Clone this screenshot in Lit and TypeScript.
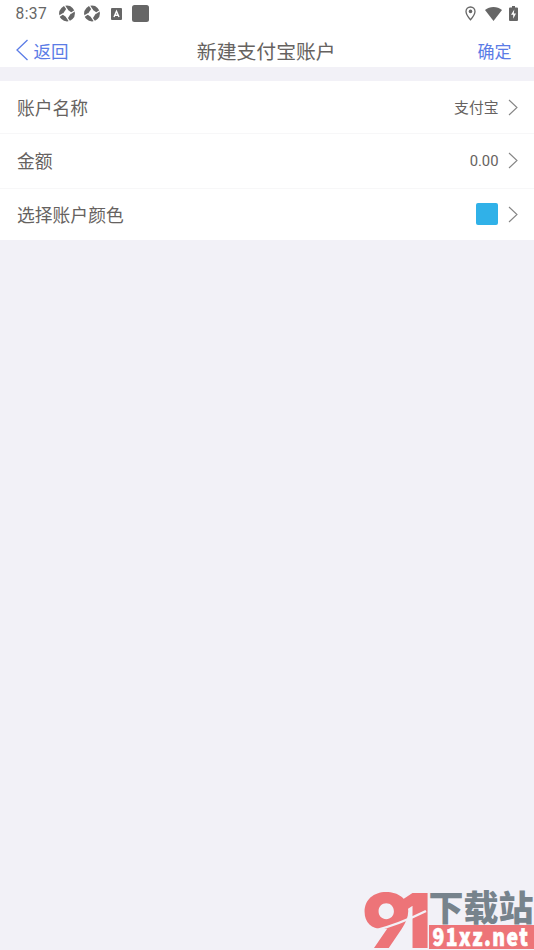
import { LitElement, html, css, svg, nothing } from "lit";
import { customElement, property } from "lit/decorators.js";

@customElement("status-bar")
class StatusBar extends LitElement {
  static styles = css`
    :host { display: flex; height: 30px; box-sizing: border-box; justify-content: space-between; align-items: flex-start; padding: 0 16px 0 15.5px; color: #666; font: 400 15.6px/28px Roboto, sans-serif; }
    .side { display: flex; align-items: center; height: 27px; }
    .time { letter-spacing: 0.4px; width: 43px; padding-top: 1px; }
    svg { display: block; fill: currentColor; }
    .shutter { margin-right: 8px; }
    .letter { margin: 0 10px 0 2px; }
    .wifi { margin: 0 7px 0 9px; }
  `;
  private shutter() {
    return html`<svg class="shutter" width="17" height="17" viewBox="0 0 17 17">
      <circle cx="8" cy="8.5" r="7.9" />
      <path d="M7.3 3.8L12.5 7.6L8.8 13.2L3.5 9.4Z" fill="#fff" />
      <path d="M5 0L8.5 5M16.5 5.3L11.5 8.5M11 17L7.5 12M-.5 11.7L4.5 8.5" stroke="#fff" stroke-width="1.3" fill="none" />
    </svg>`;
  }
  render() {
    return html`
      <div class="side">
        <span class="time">8:37</span>
        ${this.shutter()}${this.shutter()}
        <svg class="letter" width="11" height="12" viewBox="0 0 11 12">
          <rect width="11" height="12" rx="1" />
          <path d="M3 9L5.5 3.2L8 9M4 7.2H7" stroke="#fff" stroke-width="1.4" fill="none" />
        </svg>
        <svg width="17" height="17"><rect width="17" height="17" rx="2.5" /></svg>
      </div>
      <div class="side">
        <svg width="11" height="15" viewBox="0 0 11 15">
          <path d="M5.5 1C2.9 1 1 3 1 5.5C1 8.6 5.5 13.8 5.5 13.8S10 8.6 10 5.5C10 3 8.1 1 5.5 1Z" fill="none" stroke="currentColor" stroke-width="1.3" />
          <circle cx="5.5" cy="5.4" r="1.8" />
        </svg>
        <svg class="wifi" width="17" height="14" viewBox="0 0 17 14"><path d="M0 3C4.7-.9 12.3-.9 17 3L8.5 14Z" /></svg>
        <svg width="9" height="15" viewBox="0 0 9 15">
          <path d="M3 0H6V1.5H8Q9 1.5 9 2.5V14Q9 15 8 15H1Q0 15 0 14V2.5Q0 1.5 1 1.5H3Z" />
          <path d="M5.3 3.5L2 8.7H4.2V12.8L7 7.6H4.8Z" fill="#fff" />
        </svg>
      </div>`;
  }
}

@customElement("nav-bar")
class NavBar extends LitElement {
  static styles = css`
    :host { display: grid; grid-template-columns: 1fr auto 1fr; height: 37px; align-items: start; padding: 0 22.5px 0 15px; color: #5b7ce6; font: 17.5px/42px "Noto Sans CJK SC", sans-serif; }
    .back { display: flex; align-items: flex-start; }
    .back svg { margin: 9px 4.5px 0 0; }
    .title { color: #666260; font-size: 19.85px; font-weight: 400; margin: 0 0 0 6px; line-height: 41px; }
    .ok { text-align: right; font-size: 17px; }
  `;
  render() {
    return html`
      <div class="back">
        <svg width="14" height="22" viewBox="0 0 14 22"><path d="M12.5 1L2 11L12.5 21" fill="none" stroke="currentColor" stroke-width="1.3" /></svg>
        <span>返回</span>
      </div>
      <h1 class="title">新建支付宝账户</h1>
      <div class="ok">确定</div>`;
  }
}

@customElement("setting-row")
class SettingRow extends LitElement {
  @property() label = "";
  @property() value = "";
  @property({ type: Boolean }) swatch = false;
  static styles = css`
    :host { display: flex; align-items: center; box-sizing: border-box; background: #fff; padding: 0 16px 0 17px; color: #666260; font: 17.8px/26px "Noto Sans CJK SC", sans-serif; }
    .label { flex: 1; }
    .value { font: 14.8px/24px Roboto, "Noto Sans CJK SC", sans-serif; padding-top: 2px; margin-right: -0.5px; }
    .swatch { width: 22px; height: 22px; border-radius: 2px; background: #30b1e8; }
    svg { display: block; margin-left: 10px; }
  `;
  render() {
    return html`
      <span class="label">${this.label}</span>
      ${this.value ? html`<span class="value">${this.value}</span>` : nothing}
      ${this.swatch ? html`<div class="swatch"></div>` : nothing}
      <svg width="10" height="17" viewBox="0 0 10 17"><path d="M1 1L9 8.5L1 16" fill="none" stroke="#858585" stroke-width="1.1" /></svg>`;
  }
}

@customElement("site-mark")
class SiteMark extends LitElement {
  static styles = css`
    :host { display: block; }
    svg { display: block; }
    .digits { font-family: Inter, sans-serif; font-weight: 900; fill: #ed7478; font-feature-settings: "ss01", "cv04"; letter-spacing: -14px; }
    .name { font-family: "Noto Sans CJK SC", sans-serif; font-weight: 900; fill: #77838c; }
    .url { font-family: "Noto Sans CJK SC", sans-serif; font-weight: 900; fill: #fff; stroke: #fff; stroke-width: 0.7px; letter-spacing: 1.9px; }
  `;
  render() {
    return html`<svg width="172" height="62" viewBox="0 0 172 62">${svg`
      <text class="digits" x="0" y="60" font-size="76">91</text>
      <path d="M10 43.5Q38 36 64 23" fill="none" stroke="#f2f1f7" stroke-width="2.5" />
      <text class="name" x="66.5" y="32.5" font-size="35" textLength="105" lengthAdjust="spacingAndGlyphs">下载站</text>
      <rect x="67" y="37" width="105" height="24" fill="#ed7478" />
      <text class="url" transform="translate(70.5 57.5) scale(.79 1)" font-size="24.5">91xz.net</text>`}
    </svg>`;
  }
}

@customElement("app-root")
class AppRoot extends LitElement {
  static styles = css`
    :host { display: flex; flex-direction: column; height: 950px; background: #f2f1f7; overflow: hidden; position: relative; }
    .top { background: #fff; }
    .list { margin-top: 14px; display: grid; grid-template-rows: 52px 54px 51px; gap: 1px; background: #f7f7f8; }
    .raised { padding-bottom: 2px; }
    .lifted { padding-bottom: 1px; }
    .mark { position: absolute; right: 0; bottom: 0; }
  `;
  render() {
    return html`
      <div class="top"><status-bar></status-bar><nav-bar></nav-bar></div>
      <div class="list">
        <setting-row label="账户名称" value="支付宝"></setting-row>
        <setting-row class="raised" label="金额" value="0.00"></setting-row>
        <setting-row class="lifted" label="选择账户颜色" swatch></setting-row>
      </div>
      <site-mark class="mark"></site-mark>`;
  }
}
